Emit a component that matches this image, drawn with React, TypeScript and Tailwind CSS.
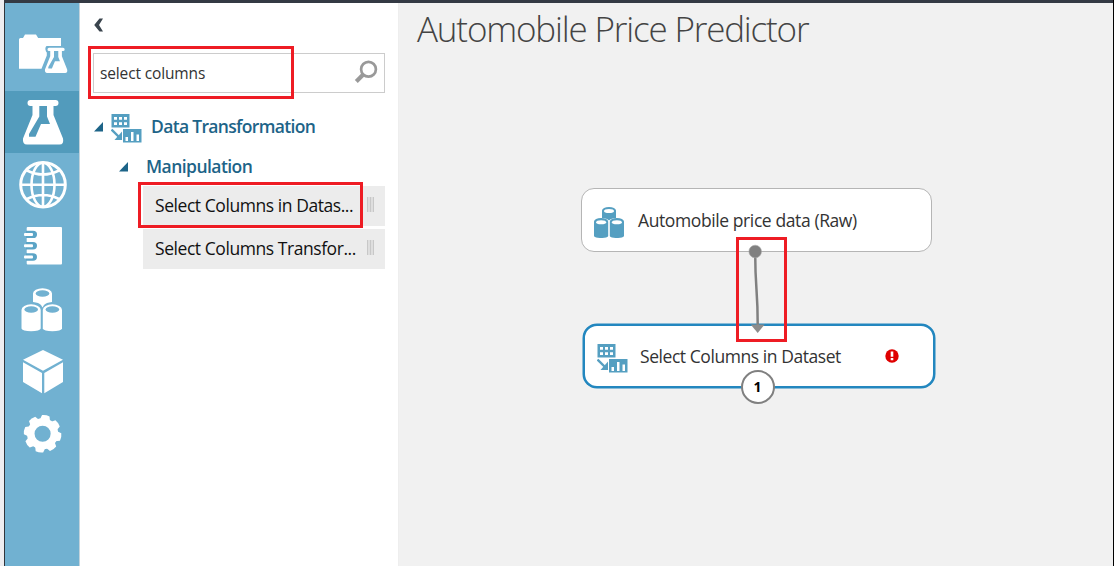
import type { ReactNode } from "react";

const SANS = "font-['Open_Sans','Noto_Sans',sans-serif]";

function NavItem({ box, active, tall, children }: { box: string; active?: boolean; tall?: boolean; children: ReactNode }) {
  return (
    <button className={`block w-[74px] shrink-0 ${tall ? "h-[88px]" : "h-[62px]"} ${active ? "bg-[#529bbc]" : ""}`}>
      <svg viewBox={box} className="block h-full w-full">{children}</svg>
    </button>
  );
}

const FLASK =
  "M30.500 100h25a2.700 2.700 0 0 1 0 6H53.500v9l9.500 23.500q1.200 6-3.500 6H27q-4.700 0-4-6L32.500 115v-9h-2a2.700 2.700 0 0 1 0-6z M39.300 106v10.500L29 134v2.800h6.500l5.500-12.800h9l-3-7.500v-10.500z";

function Sidebar() {
  return (
    <nav className="flex w-[75px] shrink-0 flex-col border-r border-[#c3d3dc] bg-[#71b1d1]">
      <NavItem tall box="5 3 74 88">
        <path fill="#fff" d="M19 39.500q0-1.500 1.500-1.500H23l2-3.500h11l2.200 3.500H61v8H46.500q-2 1.500-.5 5.500l.8 1v3L41.500 68.700H19z" />
        <g transform="translate(32.200 -9) scale(.555 .567)">
          <path fill="#fff" fillRule="evenodd" d={FLASK} />
        </g>
      </NavItem>
      <NavItem active box="5 91 74 62">
        <path fill="#fff" fillRule="evenodd" d={FLASK} />
      </NavItem>
      <NavItem box="5 153 74 62">
        <g fill="none" stroke="#fff" strokeWidth="2.600">
          <circle cx="43" cy="184.700" r="22.300" strokeWidth="3" />
          <ellipse cx="43" cy="184.700" rx="11.500" ry="22" />
          <path d="M43 162v45M21 184.700h44M27 170.500q16 8 32 0M27 199q16-8 32 0" />
        </g>
      </NavItem>
      <NavItem box="5 215 74 62">
        <rect x="26.700" y="227" width="35.300" height="37.500" rx="1" fill="#fff" />
        {[234.400, 245.800, 257].map((y) => (
          <g key={y}>
            <path d={`M26 ${y - 3.700}h7q4 0 4 3.700t-4 3.700h-7z`} fill="#5ba4c6" />
            <rect x="24" y={y - 1.500} width="9" height="3" rx="1" fill="#fff" />
          </g>
        ))}
      </NavItem>
      <NavItem box="5 277 74 62">
        <g fill="#fff">
          <path d="M33 293.500a9.500 5.300 0 0 1 19 0v8.500q-6 .5-8 3l-1.500 2.500-1.500-2.500q-2-2.500-8-3z" />
          <path d="M21.500 310a9.600 5.800 0 0 1 19.200 0v18.500a9.600 2.800 0 0 1-19.200 0z" />
          <path d="M42.800 310a9.600 5.800 0 0 1 19.200 0v18.500a9.600 2.800 0 0 1-19.200 0z" />
        </g>
        <g fill="#71b1d1">
          <ellipse cx="42.500" cy="293.500" rx="6.800" ry="3.200" />
          <ellipse cx="31.200" cy="309.500" rx="6.800" ry="3.200" />
          <ellipse cx="52.400" cy="309.500" rx="6.800" ry="3.200" />
        </g>
      </NavItem>
      <NavItem box="5 339 74 62">
        <path fill="#fff" d="M43 350l20 9.700-20 11-20-11zM23 362.300l19 10.600v20.300l-19-11.300zM63 362.300l-18.700 10.600v20.300L63 381.900z" />
      </NavItem>
      <NavItem box="5 401 74 62">
        <circle cx="42.600" cy="433.800" r="11.800" fill="none" stroke="#fff" strokeWidth="7.500" />
        {[10, 55, 100, 145, 190, 235, 280, 325].map((a) => (
          <path key={a} transform={`rotate(${a} 42.600 433.800)`} fill="#fff" d="M37.400 420.500l1.400-5q3.800-1.200 7.600 0l1.400 5z" />
        ))}
      </NavItem>
    </nav>
  );
}

function TransformIcon({ className }: { className: string }) {
  return (
    <svg viewBox="0 0 31 29" className={className}>
      <path fill="#559fc1" d="M.5 0h18v13.500H.5zM12 15h18.500v13.500H12z" />
      <g fill="#fff">
        <path d="M3 3h3v2.800H3zM8 3h3v2.800H8zM13 3h3v2.800h-3zM3 8.200h3V11H3zM8 8.200h3V11H8zM13 8.200h3V11h-3z" />
        <path d="M14.500 23h2.500v4h-2.500zM20 18h2.500v9H20zM25.500 20.500H28V27h-2.500z" />
      </g>
      <path d="M.5 15.500l8 8" stroke="#559fc1" strokeWidth="2.400" />
      <path fill="#559fc1" d="M11 17.500V26H3.500z" />
    </svg>
  );
}

function DataIcon() {
  return (
    <svg viewBox="0 0 30 31" className="mt-[4px] h-[31px] w-[30px] shrink-0">
      <g fill="#559fc1">
        <path d="M8 3.500a7 3.500 0 0 1 14 0V11q-5 0-7 2.500Q13 11 8 11z" />
        <path d="M0 14.500a7 3.500 0 0 1 14.200 0V29a7 2 0 0 1-14.200 0zM15.800 14.500a7 3.500 0 0 1 14.200 0V29a7 2 0 0 1-14.200 0z" />
      </g>
      <g fill="#fff">
        <ellipse cx="15" cy="4" rx="5" ry="2" />
        <ellipse cx="7.100" cy="15.300" rx="5" ry="2" />
        <ellipse cx="22.900" cy="15.300" rx="5" ry="2" />
      </g>
    </svg>
  );
}

function Caret() {
  return (
    <svg viewBox="0 0 9 10" className="mb-px h-[10px] w-[9px] shrink-0">
      <path d="M9 0v9.500H0z" fill="#1d6488" />
    </svg>
  );
}

function ModuleRow({ label }: { label: string }) {
  return (
    <li className="flex h-10 items-center justify-between bg-[#ececec] pr-[11px] pl-3">
      <span className="mb-[2px] text-[17.500px] tracking-[-0.440px] whitespace-nowrap text-[#111]">{label}</span>
      <span className="mb-[3px] flex h-[15px] gap-px bg-[#dedede]">
        <i className="w-px bg-[#c8c8c8]" />
        <i className="ml-px w-px bg-[#c8c8c8]" />
        <i className="ml-px w-px bg-[#c8c8c8]" />
      </span>
    </li>
  );
}

function Palette() {
  return (
    <aside className="flex w-[319px] shrink-0 flex-col border-r border-[#eee] bg-white pr-[13px]">
      <button className="mt-[15px] ml-[14px] h-[14px] w-[10px]">
        <svg viewBox="0 0 10 14" className="block h-full w-full">
          <path d="M9 .5H5.500L.2 7l5.300 6.500H9L5 7z" fill="#3a444d" />
        </svg>
      </button>
      <div className="mt-[21px] ml-[13px] flex h-10 items-center justify-between border border-[#ccc] pr-[6px] pl-[6px]">
        <span className="mt-[2px] text-[15.500px] tracking-[-0.140px] text-[#333]">select columns</span>
        <svg viewBox="0 0 24 24" className="mb-[2px] h-6 w-6" fill="none" stroke="#999">
          <circle cx="14.500" cy="9.200" r="7.400" strokeWidth="2.700" />
          <path d="M9.500 14.200L2.300 21.400" strokeWidth="4.200" />
        </svg>
      </div>
      <div className="mt-[16px] ml-[14px] flex h-9 items-center text-[#1d6488]">
        <Caret />
        <TransformIcon className="mt-[2px] ml-[8px] h-[29px] w-[31px] shrink-0" />
        <h2 className="mb-[2px] ml-[9px] text-[17.500px] font-semibold tracking-[-0.670px] whitespace-nowrap">Data Transformation</h2>
      </div>
      <div className="mt-[4px] ml-[39px] flex h-9 items-center text-[#1d6488]">
        <Caret />
        <h3 className="mb-[2px] ml-[18px] text-[17.500px] font-semibold tracking-[-0.550px]">Manipulation</h3>
      </div>
      <ul className="mt-[1px] ml-[63px] flex flex-col gap-[3px]">
        <ModuleRow label="Select Columns in Datas..." />
        <ModuleRow label="Select Columns Transfor..." />
      </ul>
    </aside>
  );
}

function Canvas() {
  return (
    <main className="relative min-w-0 flex-1 bg-[#f1f1f1]">
      <h1 className="pt-[2px] pl-[18px] text-[35px] leading-[48px] font-light tracking-[-1.170px] text-[#444]">Automobile Price Predictor</h1>
      <div className="absolute top-[185px] left-[182px] flex h-[64px] w-[351px] items-center rounded-[13px] border border-[#b5b5b5] bg-white pl-[12px]">
        <DataIcon />
        <span className="mt-px ml-[14px] text-[17.500px] tracking-[-0.400px] whitespace-nowrap text-[#333]">Automobile price data (Raw)</span>
      </div>
      <div className="absolute top-[321px] left-[184px] flex h-[64px] w-[352px] items-center rounded-[14px] border-[2px] border-[#2387bf] bg-white pl-[12px] shadow-[0_0_0_0.500px_#2387bf]">
        <TransformIcon className="mt-[5px] h-[29px] w-[31px] shrink-0" />
        <span className="ml-[12px] w-[245px] text-[17.500px] tracking-[-0.440px] whitespace-nowrap text-[#333]">Select Columns in Dataset</span>
        <svg viewBox="0 0 14 14" className="mb-px h-[14px] w-[14px]">
          <circle cx="7" cy="7" r="6.700" fill="#df0000" />
          <path d="M5.700 2.500h2.600v5.300H5.700zM5.700 9h2.600v2.300H5.700z" fill="#fff" />
        </svg>
      </div>
      <svg viewBox="0 0 40 100" className="absolute top-[240px] left-[336px] h-[100px] w-[40px]">
        <path d="M20.200 9C20.200 48 22.700 44 22.700 82" fill="none" stroke="#808080" strokeWidth="2.500" />
        <circle cx="20.200" cy="8.500" r="6.300" fill="#808080" stroke="#aaa" strokeWidth=".6" />
        <path d="M15.700 81.500h14l-7 8.500z" fill="#8c8c8c" />
      </svg>
      <div className="absolute top-[367px] left-[342px] flex h-[34px] w-[34px] items-center justify-center rounded-full border-2 border-[#808080] bg-white pr-px pb-[2px] text-[14px] font-bold text-black">1</div>
    </main>
  );
}

export default function App() {
  return (
    <div className={`relative flex h-[566px] w-[1114px] overflow-hidden bg-[#ededf0] pl-1 ${SANS}`}>
      <div className="flex min-w-0 flex-1 flex-col border-r border-black">
        <header className="h-[3px] shrink-0 bg-[#343a44]" />
        <div className="flex min-h-0 flex-1 border-l border-[#30353b]">
          <Sidebar />
          <Palette />
          <Canvas />
        </div>
      </div>
      <div className="absolute top-[46px] left-[88px] h-[53px] w-[206px] border-[3px] border-[#ee1c24]" />
      <div className="absolute top-[182px] left-[138px] h-[46px] w-[225px] border-[3px] border-[#ee1c24]" />
      <div className="absolute top-[237px] left-[736px] h-[105px] w-[51px] border-[3px] border-[#ee1c24]" />
    </div>
  );
}
